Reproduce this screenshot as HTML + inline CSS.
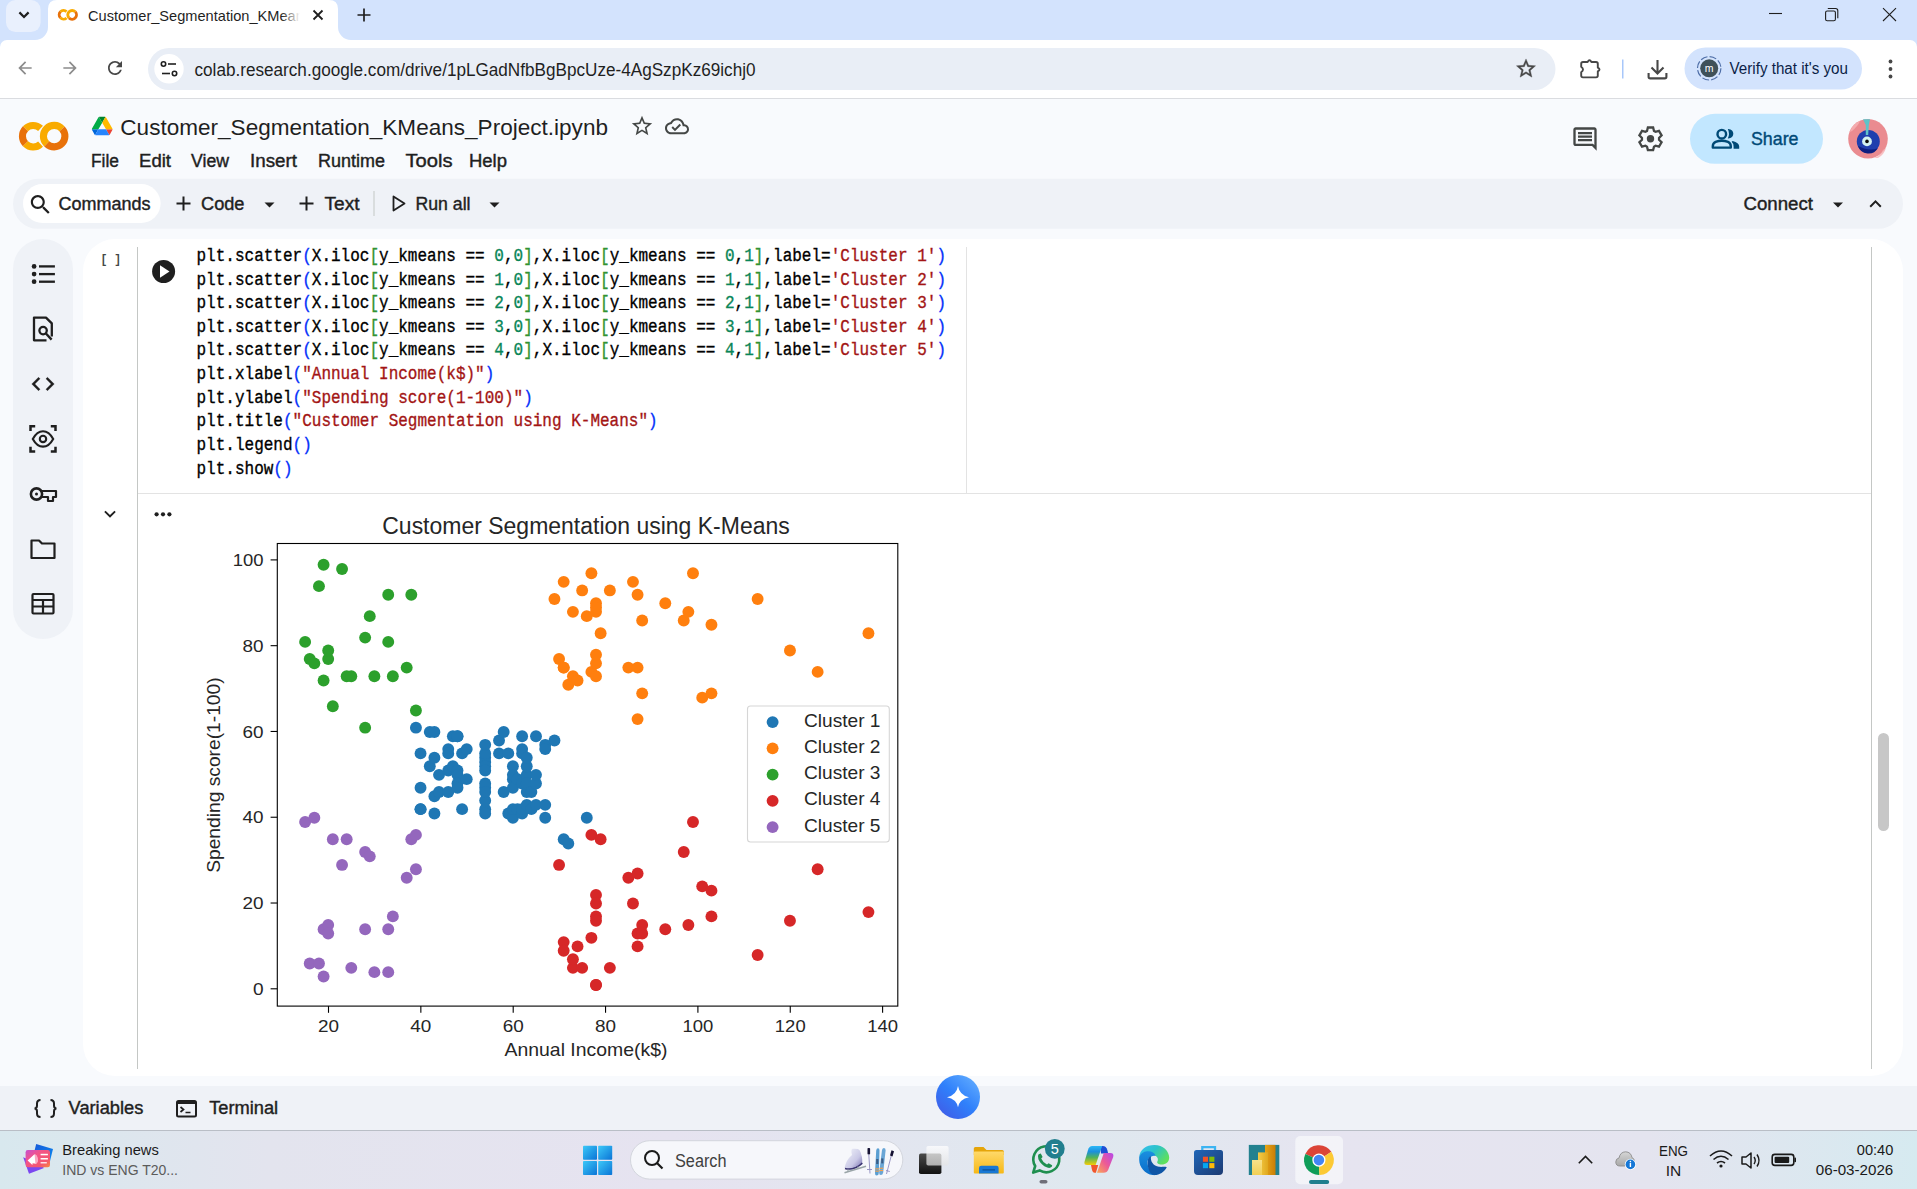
<!DOCTYPE html>
<html><head><meta charset="utf-8"><title>Customer_Segmentation_KMeans_Project.ipynb - Colab</title>
<style>html,body{margin:0;padding:0;background:#fff;overflow:hidden;}svg{display:block;}</style></head>
<body><svg width="1917" height="1189" viewBox="0 0 1917 1189">
<defs><linearGradient id="tabfade" x1="0" x2="1"><stop offset="0" stop-color="#fff" stop-opacity="0"/><stop offset="1" stop-color="#fff" stop-opacity="1"/></linearGradient></defs>
<rect x="0" y="0" width="1917" height="40" fill="#d3e3fd"/>
<rect x="6" y="0" width="34.6" height="32" rx="9.5" fill="#e9f0fd"/>
<path d="M19.4 12.4 L24 17 L28.6 12.4" fill="none" stroke="#1f1f1f" stroke-width="2.2"/>
<path d="M35 40 A13 13 0 0 0 48 27 L48 9 Q48 0 57 0 L329 0 Q338 0 338 9 L338 27 A13 13 0 0 0 351 40 Z" fill="#ffffff"/>
<path d="M66.52 11.62 A4.35 4.35 0 0 0 60.42 11.78" fill="none" stroke="#f9ab00" stroke-width="2.88"/>
<path d="M60.42 11.78 A4.35 4.35 0 0 0 60.42 17.82" fill="none" stroke="#e8710a" stroke-width="2.88"/>
<path d="M60.42 17.82 A4.35 4.35 0 0 0 66.52 17.98" fill="none" stroke="#f9ab00" stroke-width="2.88"/>
<path d="M75.24 11.83 A4.35 4.35 0 1 0 69.03 17.93" fill="none" stroke="#f9ab00" stroke-width="2.88"/>
<path d="M69.03 17.93 A4.35 4.35 0 0 0 75.24 11.83" fill="none" stroke="#e8710a" stroke-width="2.88"/>
<defs><clipPath id="tabclip"><rect x="80" y="0" width="220" height="40"/></clipPath></defs>
<g clip-path="url(#tabclip)">
<text x="88" y="21" font-size="14.6" fill="#1f1f1f" font-family="Liberation Sans" >Customer_Segmentation_KMeans_Project.ipynb</text>
</g>
<rect x="281" y="0" width="19" height="40" fill="url(#tabfade)"/>
<rect x="300" y="0" width="28" height="40" fill="#fff"/>
<path d="M313.5 10.5 L322.5 19.5 M322.5 10.5 L313.5 19.5" stroke="#1f1f1f" stroke-width="1.8"/>
<path d="M364 8.5 V21.5 M357.5 15 H370.5" stroke="#1f1f1f" stroke-width="1.7"/>
<path d="M1769 13.5 H1782" stroke="#1f1f1f" stroke-width="1.1"/>
<rect x="1825.6" y="11" width="9.8" height="9.8" rx="1.6" fill="none" stroke="#1f1f1f" stroke-width="1.1"/>
<path d="M1827.8 8.5 H1835.6 Q1837.8 8.5 1837.8 10.7 V18.2" fill="none" stroke="#1f1f1f" stroke-width="1.1"/>
<path d="M1883 8.2 L1896 21 M1896 8.2 L1883 21" stroke="#1f1f1f" stroke-width="1.1"/>
<rect x="0" y="40" width="1917" height="58" fill="#ffffff"/>
<path d="M0 40 H7 A7 7 0 0 0 0 47 Z" fill="#d3e3fd"/>
<path d="M1917 40 H1910 A7 7 0 0 1 1917 47 Z" fill="#d3e3fd"/>
<rect x="0" y="98" width="1917" height="1" fill="#dadce0"/>
<path transform="translate(15 58) scale(0.8333333333333334)" d="M20 11H7.83l5.59-5.59L12 4l-8 8 8 8 1.41-1.41L7.83 13H20v-2z" fill="#8c8c8c" />
<path transform="translate(60 58) scale(0.8333333333333334)" d="M12 4l-1.41 1.41L16.17 11H4v2h12.17l-5.58 5.59L12 20l8-8z" fill="#8c8c8c" />
<path transform="translate(104.5 57.5) scale(0.875)" d="M17.65 6.35C16.2 4.9 14.21 4 12 4c-4.42 0-7.99 3.58-7.99 8s3.57 8 7.99 8c3.73 0 6.84-2.55 7.73-6h-2.08c-.82 2.33-3.04 4-5.65 4-3.31 0-6-2.69-6-6s2.69-6 6-6c1.66 0 3.14.69 4.22 1.78L13 11h7V4l-2.35 2.35z" fill="#474747" />
<rect x="148" y="48" width="1407.5" height="42" rx="21" fill="#e9eef6"/>
<circle cx="169" cy="68.8" r="14.7" fill="#ffffff"/>
<circle cx="163.5" cy="64" r="2.2" fill="none" stroke="#1f1f1f" stroke-width="1.6"/>
<path d="M168 64 H176" stroke="#1f1f1f" stroke-width="1.6"/>
<circle cx="174.5" cy="73.5" r="2.2" fill="none" stroke="#1f1f1f" stroke-width="1.6"/>
<path d="M162 73.5 H170" stroke="#1f1f1f" stroke-width="1.6"/>
<text x="194.5" y="75.8" font-size="17.5" fill="#1f1f1f" font-family="Liberation Sans" textLength="561" lengthAdjust="spacingAndGlyphs" >colab.research.google.com/drive/1pLGadNfbBgBpcUze-4AgSzpKz69ichj0</text>
<path transform="translate(1514.5 57) scale(0.9583333333333334)" d="M22 9.24l-7.19-.62L12 2 9.19 8.63 2 9.24l5.46 4.73L5.82 21 12 17.27 18.18 21l-1.63-7.03L22 9.24zM12 15.4l-3.76 2.27 1-4.28-3.32-2.88 4.38-.38L12 6.1l1.71 4.04 4.38.38-3.32 2.88 1 4.28L12 15.4z" fill="#474747" stroke="#474747" stroke-width="0.35"/>
<path d="M1583 62 H1587.6 Q1589.5 58.6 1591.4 62 H1596 Q1597.8 62 1597.8 63.8 V67.6 Q1601.2 69.5 1597.8 71.4 V75.6 Q1597.8 77.4 1596 77.4 H1583 Q1581.2 77.4 1581.2 75.6 V72.2 Q1584.8 69.5 1581.2 66.8 V63.8 Q1581.2 62 1583 62 Z" fill="none" stroke="#474747" stroke-width="1.9" stroke-linejoin="round"/>
<rect x="1622" y="59.5" width="1.5" height="19" fill="#a8c7fa"/>
<path d="M1657.5 60 V73 M1651.5 67.5 L1657.5 73.5 L1663.5 67.5" fill="none" stroke="#474747" stroke-width="2.1"/>
<path d="M1648.6 73 V76.8 Q1648.6 78.4 1650.2 78.4 H1664.8 Q1666.4 78.4 1666.4 76.8 V73" fill="none" stroke="#474747" stroke-width="2.1"/>
<rect x="1684.5" y="47.5" width="177.5" height="42" rx="21" fill="#d3e3fd"/>
<circle cx="1709.2" cy="68.3" r="11.7" fill="none" stroke="#4f6fa8" stroke-width="1.2" stroke-dasharray="7 2.2"/>
<circle cx="1709.2" cy="68.3" r="9" fill="#3f5159"/>
<text x="1709.2" y="72" font-size="10.5" fill="#ffffff" font-family="Liberation Sans" text-anchor="middle" >m</text>
<text x="1729.5" y="74.4" font-size="16" fill="#0b1e47" font-family="Liberation Sans" textLength="118.5" lengthAdjust="spacingAndGlyphs" >Verify that it&#x27;s you</text>
<circle cx="1890.5" cy="61.5" r="1.9" fill="#474747"/>
<circle cx="1890.5" cy="69" r="1.9" fill="#474747"/>
<circle cx="1890.5" cy="76.5" r="1.9" fill="#474747"/>
<rect x="0" y="99" width="1917" height="987" fill="#f8fafd"/>
<path d="M40.53 128.34 A10.75 10.75 0 0 0 25.47 128.73" fill="none" stroke="#f9ab00" stroke-width="7.10"/>
<path d="M25.47 128.73 A10.75 10.75 0 0 0 25.47 143.67" fill="none" stroke="#e8710a" stroke-width="7.10"/>
<path d="M25.47 143.67 A10.75 10.75 0 0 0 40.53 144.06" fill="none" stroke="#f9ab00" stroke-width="7.10"/>
<path d="M62.06 128.87 A10.75 10.75 0 1 0 46.73 143.93" fill="none" stroke="#f9ab00" stroke-width="7.10"/>
<path d="M46.73 143.93 A10.75 10.75 0 0 0 62.06 128.87" fill="none" stroke="#e8710a" stroke-width="7.10"/>
<g transform="translate(91.9 116.8) scale(0.236)"><path d="m6.6 66.85 3.85 6.65c.8 1.4 1.95 2.5 3.3 3.3l13.75-23.8h-27.5c0 1.55.4 3.1 1.2 4.5z" fill="#0066da"/><path d="m43.65 25-13.75-23.8c-1.35.8-2.5 1.9-3.3 3.3l-25.4 44a9.06 9.06 0 0 0 -1.2 4.5h27.5z" fill="#00ac47"/><path d="m73.55 76.8c1.35-.8 2.5-1.9 3.3-3.3l1.6-2.75 7.65-13.25c.8-1.4 1.2-2.95 1.2-4.5h-27.502l5.852 11.5z" fill="#ea4335"/><path d="m43.65 25 13.75-23.8c-1.35-.8-2.9-1.2-4.5-1.2h-18.5c-1.6 0-3.15.45-4.5 1.2z" fill="#00832d"/><path d="m59.8 53h-32.3l-13.75 23.8c1.35.8 2.9 1.2 4.5 1.2h50.8c1.6 0 3.15-.45 4.5-1.2z" fill="#2684fc"/><path d="m73.4 26.5-12.7-22c-.8-1.4-1.95-2.5-3.3-3.3l-13.75 23.8 16.15 28h27.45c0-1.55-.4-3.1-1.2-4.5z" fill="#ffba00"/></g>
<text x="120.3" y="135" font-size="22.5" fill="#1f1f1f" font-family="Liberation Sans" textLength="487.7" lengthAdjust="spacingAndGlyphs" >Customer_Segmentation_KMeans_Project.ipynb</text>
<path transform="translate(629.8 113.8) scale(1.0166666666666666)" d="M22 9.24l-7.19-.62L12 2 9.19 8.63 2 9.24l5.46 4.73L5.82 21 12 17.27 18.18 21l-1.63-7.03L22 9.24zM12 15.4l-3.76 2.27 1-4.28-3.32-2.88 4.38-.38L12 6.1l1.71 4.04 4.38.38-3.32 2.88 1 4.28L12 15.4z" fill="#444746" />
<path transform="translate(665 114.2) scale(1.0)" d="M19.35 10.04C18.67 6.59 15.64 4 12 4 9.11 4 6.6 5.64 5.35 8.04 2.34 8.36 0 10.91 0 14c0 3.31 2.69 6 6 6h13c2.76 0 5-2.24 5-5 0-2.64-2.05-4.78-4.65-4.96zM19 18H6c-2.21 0-4-1.79-4-4 0-2.05 1.53-3.76 3.56-3.97l1.07-.11.5-.95C8.08 7.14 9.94 6 12 6c2.62 0 4.88 1.86 5.39 4.43l.3 1.5 1.53.11c1.56.1 2.78 1.41 2.78 2.96 0 1.65-1.35 3-3 3zm-9-3.82l-2.09-2.09L6.5 13.5 10 17l6.01-6.01-1.41-1.41z" fill="#444746" />
<text x="91" y="166.7" font-size="17.5" fill="#1f1f1f" font-family="Liberation Sans" textLength="28" lengthAdjust="spacingAndGlyphs" stroke="#1f1f1f" stroke-width="0.4">File</text>
<text x="139" y="166.7" font-size="17.5" fill="#1f1f1f" font-family="Liberation Sans" textLength="32" lengthAdjust="spacingAndGlyphs" stroke="#1f1f1f" stroke-width="0.4">Edit</text>
<text x="191" y="166.7" font-size="17.5" fill="#1f1f1f" font-family="Liberation Sans" textLength="38" lengthAdjust="spacingAndGlyphs" stroke="#1f1f1f" stroke-width="0.4">View</text>
<text x="250" y="166.7" font-size="17.5" fill="#1f1f1f" font-family="Liberation Sans" textLength="47" lengthAdjust="spacingAndGlyphs" stroke="#1f1f1f" stroke-width="0.4">Insert</text>
<text x="318" y="166.7" font-size="17.5" fill="#1f1f1f" font-family="Liberation Sans" textLength="67" lengthAdjust="spacingAndGlyphs" stroke="#1f1f1f" stroke-width="0.4">Runtime</text>
<text x="405.5" y="166.7" font-size="17.5" fill="#1f1f1f" font-family="Liberation Sans" textLength="47" lengthAdjust="spacingAndGlyphs" stroke="#1f1f1f" stroke-width="0.4">Tools</text>
<text x="469" y="166.7" font-size="17.5" fill="#1f1f1f" font-family="Liberation Sans" textLength="38" lengthAdjust="spacingAndGlyphs" stroke="#1f1f1f" stroke-width="0.4">Help</text>
<path transform="translate(1571 125) scale(1.1666666666666667)" d="M21.99 4c0-1.1-.89-2-1.99-2H4c-1.1 0-2 .9-2 2v12c0 1.1.9 2 2 2h14l4 4-.01-18zM20 4v13.17L18.83 16H4V4h16zM6 12h12v2H6zm0-3h12v2H6zm0-3h12v2H6z" fill="#444746" />
<path d="M1647.00 130.94 L1647.89 127.50 L1653.11 127.50 L1654.00 130.94 L1655.55 131.84 L1658.98 130.89 L1661.59 135.41 L1659.05 137.90 L1659.05 139.70 L1661.59 142.19 L1658.98 146.71 L1655.55 145.76 L1654.00 146.66 L1653.11 150.10 L1647.89 150.10 L1647.00 146.66 L1645.45 145.76 L1642.02 146.71 L1639.41 142.19 L1641.95 139.70 L1641.95 137.90 L1639.41 135.41 L1642.02 130.89 L1645.45 131.84 Z" fill="none" stroke="#444746" stroke-width="2.3" stroke-linejoin="miter"/>
<circle cx="1650.5" cy="138.8" r="3.7" fill="#444746"/>
<rect x="1690" y="113.8" width="133" height="50" rx="25" fill="#c2e7ff"/>
<circle cx="1721.8" cy="134.2" r="4.3" fill="none" stroke="#004a77" stroke-width="2.4"/>
<path d="M1712.8 147.6 V146.2 Q1712.8 143.2 1715.6 141.9 Q1718.6 140.7 1721.8 140.7 Q1725 140.7 1728 141.9 Q1730.8 143.2 1730.8 146.2 V147.6 Z" fill="none" stroke="#004a77" stroke-width="2.4" stroke-linejoin="round"/>
<path d="M1727.8 129 C1735.2 128.6 1735.2 138.9 1727.8 138.5 Q1730.2 133.75 1727.8 129 Z" fill="#004a77"/>
<path d="M1732.6 141.1 Q1739.2 142.6 1739.2 146.6 V148.8 H1733.6 V146.6 Q1733.6 143.4 1731.6 141.7 Z" fill="#004a77"/>
<text x="1751" y="145.4" font-size="18.5" fill="#004a77" font-family="Liberation Sans" textLength="47.5" lengthAdjust="spacingAndGlyphs" stroke="#004a77" stroke-width="0.4">Share</text>
<circle cx="1868" cy="138.8" r="19.8" fill="#ea8b90"/>
<path d="M1852 131 Q1858 126 1860 121 L1856 123 Q1851 127 1850 132 Z" fill="#f6b3b5" opacity="0.8"/>
<path d="M1883 150 Q1880 156 1874 158 L1878 158 Q1884 155 1886 148 Z" fill="#f6b3b5" opacity="0.8"/>
<circle cx="1868.3" cy="141.4" r="11.5" fill="#1f3fae"/>
<path d="M1858 146 A11 11 0 0 0 1878 148 Q1870 152 1858 146 Z" fill="#0d1f80"/>
<circle cx="1867" cy="141.4" r="4.9" fill="#d3f2f1"/>
<circle cx="1867" cy="141.4" r="1.8" fill="#0a0a0a"/>
<path d="M1863 119.2 H1870 L1868.8 125 L1868.2 135 H1865.8 L1865.8 125 Z" fill="#5ec4c9"/>
<rect x="13" y="178.8" width="1890" height="50" rx="25" fill="#eff2f7"/>
<rect x="23" y="184" width="137.6" height="39" rx="19.5" fill="#ffffff"/>
<path transform="translate(27.6 191.8) scale(1.075)" d="M15.5 14h-.79l-.28-.27C15.41 12.59 16 11.11 16 9.5 16 5.91 13.09 3 9.5 3S3 5.91 3 9.5 5.91 16 9.5 16c1.61 0 3.09-.59 4.23-1.57l.27.28v.79l5 4.99L20.49 19l-4.99-5zm-6 0C7.01 14 5 11.99 5 9.5S7.01 5 9.5 5 14 7.01 14 9.5 11.99 14 9.5 14z" fill="#1f1f1f" />
<text x="58.5" y="209.8" font-size="17.5" fill="#1f1f1f" font-family="Liberation Sans" textLength="92" lengthAdjust="spacingAndGlyphs" stroke="#1f1f1f" stroke-width="0.4">Commands</text>
<path transform="translate(171.5 191.5) scale(1.0)" d="M19 13h-6v6h-2v-6H5v-2h6V5h2v6h6v2z" fill="#1f1f1f" />
<text x="201" y="210.3" font-size="17.5" fill="#1f1f1f" font-family="Liberation Sans" textLength="43.5" lengthAdjust="spacingAndGlyphs" stroke="#1f1f1f" stroke-width="0.4">Code</text>
<path transform="translate(257.5 192.5) scale(1.0)" d="M7 10l5 5 5-5z" fill="#1f1f1f" />
<path transform="translate(294.5 191.5) scale(1.0)" d="M19 13h-6v6h-2v-6H5v-2h6V5h2v6h6v2z" fill="#1f1f1f" />
<text x="324.5" y="210.3" font-size="17.5" fill="#1f1f1f" font-family="Liberation Sans" textLength="35" lengthAdjust="spacingAndGlyphs" stroke="#1f1f1f" stroke-width="0.4">Text</text>
<rect x="373.5" y="191" width="1" height="25" fill="#c4c7c5"/>
<path d="M393.5 196.5 L404.5 203.5 L393.5 210.5 Z" fill="none" stroke="#1f1f1f" stroke-width="1.8" stroke-linejoin="round"/>
<text x="415.5" y="210.3" font-size="17.5" fill="#1f1f1f" font-family="Liberation Sans" textLength="55" lengthAdjust="spacingAndGlyphs" stroke="#1f1f1f" stroke-width="0.4">Run all</text>
<path transform="translate(482.5 192.5) scale(1.0)" d="M7 10l5 5 5-5z" fill="#1f1f1f" />
<text x="1743.5" y="210" font-size="17.5" fill="#1f1f1f" font-family="Liberation Sans" textLength="69.5" lengthAdjust="spacingAndGlyphs" stroke="#1f1f1f" stroke-width="0.4">Connect</text>
<path transform="translate(1826 192.5) scale(1.0)" d="M7 10l5 5 5-5z" fill="#1f1f1f" />
<path transform="translate(1863.5 192) scale(1.0)" d="M12 8l-6 6 1.41 1.41L12 10.83l4.59 4.58L18 14z" fill="#1f1f1f" />
<rect x="13" y="239" width="60" height="400" rx="30" fill="#eff2f7"/>
<circle cx="34.1" cy="266.4" r="2.35" fill="#1f1f1f"/>
<rect x="39" y="265.25" width="15.9" height="2.3" fill="#1f1f1f"/>
<circle cx="34.1" cy="274.1" r="2.35" fill="#1f1f1f"/>
<rect x="39" y="272.95" width="15.9" height="2.3" fill="#1f1f1f"/>
<circle cx="34.1" cy="281.7" r="2.35" fill="#1f1f1f"/>
<rect x="39" y="280.55" width="15.9" height="2.3" fill="#1f1f1f"/>
<path d="M46.5 340.3 H34 V317.6 H46 L51.8 323.4 V336.5" fill="none" stroke="#1f1f1f" stroke-width="2.3" stroke-linejoin="round"/>
<circle cx="43.1" cy="330.6" r="3.7" fill="none" stroke="#1f1f1f" stroke-width="2.3"/>
<path d="M45.7 333.3 L51.6 339.6" stroke="#1f1f1f" stroke-width="2.4"/>
<path transform="translate(29.5 370.5) scale(1.125)" d="M9.4 16.6L4.8 12l4.6-4.6L8 6l-6 6 6 6 1.4-1.4zm5.2 0l4.6-4.6-4.6-4.6L16 6l6 6-6 6-1.4-1.4z" fill="#1f1f1f" stroke="#1f1f1f" stroke-width="0.25"/>
<path d="M30.5 431 V426.3 H35.2 M50.8 426.3 H55.5 V431 M55.5 446.7 V451.4 H50.8 M35.2 451.4 H30.5 V446.7" fill="none" stroke="#1f1f1f" stroke-width="2.5"/>
<path d="M32.8 438.9 Q37 431.2 43 431.2 Q49 431.2 53.2 438.9 Q49 446.6 43 446.6 Q37 446.6 32.8 438.9 Z" fill="none" stroke="#1f1f1f" stroke-width="2.1"/>
<circle cx="43" cy="438.9" r="3.2" fill="none" stroke="#1f1f1f" stroke-width="2.1"/>
<circle cx="36.5" cy="494" r="5.6" fill="none" stroke="#1f1f1f" stroke-width="2.6"/>
<circle cx="36.5" cy="494" r="1.5" fill="#1f1f1f"/>
<path d="M42 491 H56 V497 H53 V501 H48 V497 H42" fill="none" stroke="#1f1f1f" stroke-width="2.2" stroke-linejoin="round"/>
<path d="M31.5 540.5 H39 L42 543.5 H54.5 V558 H31.5 Z" fill="none" stroke="#1f1f1f" stroke-width="2.2" stroke-linejoin="round"/>
<rect x="32.5" y="594" width="21" height="19.5" rx="1" fill="none" stroke="#1f1f1f" stroke-width="2.2"/>
<path d="M32.5 600 H53.5 M32.5 606.5 H53.5 M43 600 V613.5" stroke="#1f1f1f" stroke-width="2.2"/>
<rect x="83" y="239" width="1820" height="837" rx="32" fill="#ffffff"/>
<rect x="0" y="1086" width="1917" height="44" fill="#eff2f7"/>
<path d="M40.5 1100 Q37 1100 37 1103.5 V1105.5 Q37 1108.5 34.5 1108.5 Q37 1108.5 37 1111.5 V1113.5 Q37 1117 40.5 1117 M50.5 1100 Q54 1100 54 1103.5 V1105.5 Q54 1108.5 56.5 1108.5 Q54 1108.5 54 1111.5 V1113.5 Q54 1117 50.5 1117" fill="none" stroke="#1f1f1f" stroke-width="2"/>
<text x="68.6" y="1114" font-size="18" fill="#1f1f1f" font-family="Liberation Sans" textLength="74.7" lengthAdjust="spacingAndGlyphs" stroke="#1f1f1f" stroke-width="0.4">Variables</text>
<rect x="177" y="1101" width="19" height="15.5" rx="1.5" fill="none" stroke="#1f1f1f" stroke-width="2"/>
<rect x="177" y="1101" width="19" height="3" fill="#1f1f1f"/>
<path d="M180.5 1107 L183.5 1109.5 L180.5 1112 M185.5 1112.5 H190.5" fill="none" stroke="#1f1f1f" stroke-width="1.7"/>
<text x="209.2" y="1114" font-size="18" fill="#1f1f1f" font-family="Liberation Sans" textLength="69" lengthAdjust="spacingAndGlyphs" stroke="#1f1f1f" stroke-width="0.4">Terminal</text>
<defs><linearGradient id="gem" x1="0.85" y1="0.15" x2="0.2" y2="0.9"><stop offset="0" stop-color="#58a4fe"/><stop offset="0.5" stop-color="#2f80fb"/><stop offset="1" stop-color="#3d62ea"/></linearGradient></defs>
<circle cx="958" cy="1097" r="22" fill="url(#gem)"/>
<path d="M958 1086 Q959.6 1095.4 969 1097.2 Q959.6 1099 958 1107.2 Q956.4 1099 947 1097.2 Q956.4 1095.4 958 1086 Z" fill="#ffffff"/>
<rect x="137" y="247" width="1" height="822" fill="#c4c7c5"/>
<rect x="1871" y="247" width="1" height="822" fill="#c4c7c5"/>
<rect x="966" y="247" width="1" height="246" fill="#e3e3e3"/>
<rect x="138" y="493" width="1733" height="1" fill="#e3e3e3"/>
<text x="100.6" y="263.2" font-size="12.2" fill="#444746" font-family="Liberation Mono" textLength="20.6" lengthAdjust="spacingAndGlyphs" font-weight="bold" >[ ]</text>
<circle cx="163.6" cy="271.5" r="11.5" fill="#1f1f1f"/>
<path d="M160 265.3 L169.5 271.5 L160 277.7 Z" fill="#ffffff"/>
<path transform="translate(98.5 502.5) scale(0.9583333333333334)" d="M16.59 8.59L12 13.17 7.41 8.59 6 10l6 6 6-6z" fill="#1f1f1f" />
<circle cx="156.6" cy="514.3" r="2.1" fill="#1f1f1f"/>
<circle cx="163" cy="514.3" r="2.1" fill="#1f1f1f"/>
<circle cx="169.4" cy="514.3" r="2.1" fill="#1f1f1f"/>
<text x="196.5" y="260.90" font-family="Liberation Mono" font-size="16.02" xml:space="preserve" transform="translate(0 260.90) scale(1 1.1) translate(0 -260.90)"><tspan fill="#000000" stroke="#000000" stroke-width="0.3">plt.scatter</tspan><tspan fill="#0431fa" stroke="#0431fa" stroke-width="0.3">(</tspan><tspan fill="#000000" stroke="#000000" stroke-width="0.3">X.iloc</tspan><tspan fill="#319331" stroke="#319331" stroke-width="0.3">[</tspan><tspan fill="#000000" stroke="#000000" stroke-width="0.3">y_kmeans == </tspan><tspan fill="#098658" stroke="#098658" stroke-width="0.3">0</tspan><tspan fill="#000000" stroke="#000000" stroke-width="0.3">,</tspan><tspan fill="#098658" stroke="#098658" stroke-width="0.3">0</tspan><tspan fill="#319331" stroke="#319331" stroke-width="0.3">]</tspan><tspan fill="#000000" stroke="#000000" stroke-width="0.3">,X.iloc</tspan><tspan fill="#319331" stroke="#319331" stroke-width="0.3">[</tspan><tspan fill="#000000" stroke="#000000" stroke-width="0.3">y_kmeans == </tspan><tspan fill="#098658" stroke="#098658" stroke-width="0.3">0</tspan><tspan fill="#000000" stroke="#000000" stroke-width="0.3">,</tspan><tspan fill="#098658" stroke="#098658" stroke-width="0.3">1</tspan><tspan fill="#319331" stroke="#319331" stroke-width="0.3">]</tspan><tspan fill="#000000" stroke="#000000" stroke-width="0.3">,label=</tspan><tspan fill="#a31515" stroke="#a31515" stroke-width="0.3">&#x27;Cluster 1&#x27;</tspan><tspan fill="#0431fa" stroke="#0431fa" stroke-width="0.3">)</tspan></text>
<text x="196.5" y="284.54" font-family="Liberation Mono" font-size="16.02" xml:space="preserve" transform="translate(0 284.54) scale(1 1.1) translate(0 -284.54)"><tspan fill="#000000" stroke="#000000" stroke-width="0.3">plt.scatter</tspan><tspan fill="#0431fa" stroke="#0431fa" stroke-width="0.3">(</tspan><tspan fill="#000000" stroke="#000000" stroke-width="0.3">X.iloc</tspan><tspan fill="#319331" stroke="#319331" stroke-width="0.3">[</tspan><tspan fill="#000000" stroke="#000000" stroke-width="0.3">y_kmeans == </tspan><tspan fill="#098658" stroke="#098658" stroke-width="0.3">1</tspan><tspan fill="#000000" stroke="#000000" stroke-width="0.3">,</tspan><tspan fill="#098658" stroke="#098658" stroke-width="0.3">0</tspan><tspan fill="#319331" stroke="#319331" stroke-width="0.3">]</tspan><tspan fill="#000000" stroke="#000000" stroke-width="0.3">,X.iloc</tspan><tspan fill="#319331" stroke="#319331" stroke-width="0.3">[</tspan><tspan fill="#000000" stroke="#000000" stroke-width="0.3">y_kmeans == </tspan><tspan fill="#098658" stroke="#098658" stroke-width="0.3">1</tspan><tspan fill="#000000" stroke="#000000" stroke-width="0.3">,</tspan><tspan fill="#098658" stroke="#098658" stroke-width="0.3">1</tspan><tspan fill="#319331" stroke="#319331" stroke-width="0.3">]</tspan><tspan fill="#000000" stroke="#000000" stroke-width="0.3">,label=</tspan><tspan fill="#a31515" stroke="#a31515" stroke-width="0.3">&#x27;Cluster 2&#x27;</tspan><tspan fill="#0431fa" stroke="#0431fa" stroke-width="0.3">)</tspan></text>
<text x="196.5" y="308.18" font-family="Liberation Mono" font-size="16.02" xml:space="preserve" transform="translate(0 308.18) scale(1 1.1) translate(0 -308.18)"><tspan fill="#000000" stroke="#000000" stroke-width="0.3">plt.scatter</tspan><tspan fill="#0431fa" stroke="#0431fa" stroke-width="0.3">(</tspan><tspan fill="#000000" stroke="#000000" stroke-width="0.3">X.iloc</tspan><tspan fill="#319331" stroke="#319331" stroke-width="0.3">[</tspan><tspan fill="#000000" stroke="#000000" stroke-width="0.3">y_kmeans == </tspan><tspan fill="#098658" stroke="#098658" stroke-width="0.3">2</tspan><tspan fill="#000000" stroke="#000000" stroke-width="0.3">,</tspan><tspan fill="#098658" stroke="#098658" stroke-width="0.3">0</tspan><tspan fill="#319331" stroke="#319331" stroke-width="0.3">]</tspan><tspan fill="#000000" stroke="#000000" stroke-width="0.3">,X.iloc</tspan><tspan fill="#319331" stroke="#319331" stroke-width="0.3">[</tspan><tspan fill="#000000" stroke="#000000" stroke-width="0.3">y_kmeans == </tspan><tspan fill="#098658" stroke="#098658" stroke-width="0.3">2</tspan><tspan fill="#000000" stroke="#000000" stroke-width="0.3">,</tspan><tspan fill="#098658" stroke="#098658" stroke-width="0.3">1</tspan><tspan fill="#319331" stroke="#319331" stroke-width="0.3">]</tspan><tspan fill="#000000" stroke="#000000" stroke-width="0.3">,label=</tspan><tspan fill="#a31515" stroke="#a31515" stroke-width="0.3">&#x27;Cluster 3&#x27;</tspan><tspan fill="#0431fa" stroke="#0431fa" stroke-width="0.3">)</tspan></text>
<text x="196.5" y="331.82" font-family="Liberation Mono" font-size="16.02" xml:space="preserve" transform="translate(0 331.82) scale(1 1.1) translate(0 -331.82)"><tspan fill="#000000" stroke="#000000" stroke-width="0.3">plt.scatter</tspan><tspan fill="#0431fa" stroke="#0431fa" stroke-width="0.3">(</tspan><tspan fill="#000000" stroke="#000000" stroke-width="0.3">X.iloc</tspan><tspan fill="#319331" stroke="#319331" stroke-width="0.3">[</tspan><tspan fill="#000000" stroke="#000000" stroke-width="0.3">y_kmeans == </tspan><tspan fill="#098658" stroke="#098658" stroke-width="0.3">3</tspan><tspan fill="#000000" stroke="#000000" stroke-width="0.3">,</tspan><tspan fill="#098658" stroke="#098658" stroke-width="0.3">0</tspan><tspan fill="#319331" stroke="#319331" stroke-width="0.3">]</tspan><tspan fill="#000000" stroke="#000000" stroke-width="0.3">,X.iloc</tspan><tspan fill="#319331" stroke="#319331" stroke-width="0.3">[</tspan><tspan fill="#000000" stroke="#000000" stroke-width="0.3">y_kmeans == </tspan><tspan fill="#098658" stroke="#098658" stroke-width="0.3">3</tspan><tspan fill="#000000" stroke="#000000" stroke-width="0.3">,</tspan><tspan fill="#098658" stroke="#098658" stroke-width="0.3">1</tspan><tspan fill="#319331" stroke="#319331" stroke-width="0.3">]</tspan><tspan fill="#000000" stroke="#000000" stroke-width="0.3">,label=</tspan><tspan fill="#a31515" stroke="#a31515" stroke-width="0.3">&#x27;Cluster 4&#x27;</tspan><tspan fill="#0431fa" stroke="#0431fa" stroke-width="0.3">)</tspan></text>
<text x="196.5" y="355.46" font-family="Liberation Mono" font-size="16.02" xml:space="preserve" transform="translate(0 355.46) scale(1 1.1) translate(0 -355.46)"><tspan fill="#000000" stroke="#000000" stroke-width="0.3">plt.scatter</tspan><tspan fill="#0431fa" stroke="#0431fa" stroke-width="0.3">(</tspan><tspan fill="#000000" stroke="#000000" stroke-width="0.3">X.iloc</tspan><tspan fill="#319331" stroke="#319331" stroke-width="0.3">[</tspan><tspan fill="#000000" stroke="#000000" stroke-width="0.3">y_kmeans == </tspan><tspan fill="#098658" stroke="#098658" stroke-width="0.3">4</tspan><tspan fill="#000000" stroke="#000000" stroke-width="0.3">,</tspan><tspan fill="#098658" stroke="#098658" stroke-width="0.3">0</tspan><tspan fill="#319331" stroke="#319331" stroke-width="0.3">]</tspan><tspan fill="#000000" stroke="#000000" stroke-width="0.3">,X.iloc</tspan><tspan fill="#319331" stroke="#319331" stroke-width="0.3">[</tspan><tspan fill="#000000" stroke="#000000" stroke-width="0.3">y_kmeans == </tspan><tspan fill="#098658" stroke="#098658" stroke-width="0.3">4</tspan><tspan fill="#000000" stroke="#000000" stroke-width="0.3">,</tspan><tspan fill="#098658" stroke="#098658" stroke-width="0.3">1</tspan><tspan fill="#319331" stroke="#319331" stroke-width="0.3">]</tspan><tspan fill="#000000" stroke="#000000" stroke-width="0.3">,label=</tspan><tspan fill="#a31515" stroke="#a31515" stroke-width="0.3">&#x27;Cluster 5&#x27;</tspan><tspan fill="#0431fa" stroke="#0431fa" stroke-width="0.3">)</tspan></text>
<text x="196.5" y="379.10" font-family="Liberation Mono" font-size="16.02" xml:space="preserve" transform="translate(0 379.10) scale(1 1.1) translate(0 -379.10)"><tspan fill="#000000" stroke="#000000" stroke-width="0.3">plt.xlabel</tspan><tspan fill="#0431fa" stroke="#0431fa" stroke-width="0.3">(</tspan><tspan fill="#a31515" stroke="#a31515" stroke-width="0.3">&quot;Annual Income(k$)&quot;</tspan><tspan fill="#0431fa" stroke="#0431fa" stroke-width="0.3">)</tspan></text>
<text x="196.5" y="402.74" font-family="Liberation Mono" font-size="16.02" xml:space="preserve" transform="translate(0 402.74) scale(1 1.1) translate(0 -402.74)"><tspan fill="#000000" stroke="#000000" stroke-width="0.3">plt.ylabel</tspan><tspan fill="#0431fa" stroke="#0431fa" stroke-width="0.3">(</tspan><tspan fill="#a31515" stroke="#a31515" stroke-width="0.3">&quot;Spending score(1-100)&quot;</tspan><tspan fill="#0431fa" stroke="#0431fa" stroke-width="0.3">)</tspan></text>
<text x="196.5" y="426.38" font-family="Liberation Mono" font-size="16.02" xml:space="preserve" transform="translate(0 426.38) scale(1 1.1) translate(0 -426.38)"><tspan fill="#000000" stroke="#000000" stroke-width="0.3">plt.title</tspan><tspan fill="#0431fa" stroke="#0431fa" stroke-width="0.3">(</tspan><tspan fill="#a31515" stroke="#a31515" stroke-width="0.3">&quot;Customer Segmentation using K-Means&quot;</tspan><tspan fill="#0431fa" stroke="#0431fa" stroke-width="0.3">)</tspan></text>
<text x="196.5" y="450.02" font-family="Liberation Mono" font-size="16.02" xml:space="preserve" transform="translate(0 450.02) scale(1 1.1) translate(0 -450.02)"><tspan fill="#000000" stroke="#000000" stroke-width="0.3">plt.legend</tspan><tspan fill="#0431fa" stroke="#0431fa" stroke-width="0.3">()</tspan></text>
<text x="196.5" y="473.66" font-family="Liberation Mono" font-size="16.02" xml:space="preserve" transform="translate(0 473.66) scale(1 1.1) translate(0 -473.66)"><tspan fill="#000000" stroke="#000000" stroke-width="0.3">plt.show</tspan><tspan fill="#0431fa" stroke="#0431fa" stroke-width="0.3">()</tspan></text>
<rect x="1878" y="733" width="11" height="98" rx="5.5" fill="#c7c7c7"/>
<circle cx="415.93" cy="727.67" r="5.95" fill="#1f77b4"/>
<circle cx="420.55" cy="753.40" r="5.95" fill="#1f77b4"/>
<circle cx="420.55" cy="787.72" r="5.95" fill="#1f77b4"/>
<circle cx="420.55" cy="809.16" r="5.95" fill="#1f77b4"/>
<circle cx="420.55" cy="809.16" r="5.95" fill="#1f77b4"/>
<circle cx="429.79" cy="766.27" r="5.95" fill="#1f77b4"/>
<circle cx="429.79" cy="731.96" r="5.95" fill="#1f77b4"/>
<circle cx="434.40" cy="757.69" r="5.95" fill="#1f77b4"/>
<circle cx="434.40" cy="731.96" r="5.95" fill="#1f77b4"/>
<circle cx="434.40" cy="796.29" r="5.95" fill="#1f77b4"/>
<circle cx="434.40" cy="813.45" r="5.95" fill="#1f77b4"/>
<circle cx="439.02" cy="774.85" r="5.95" fill="#1f77b4"/>
<circle cx="439.02" cy="792.01" r="5.95" fill="#1f77b4"/>
<circle cx="448.25" cy="770.56" r="5.95" fill="#1f77b4"/>
<circle cx="448.25" cy="792.01" r="5.95" fill="#1f77b4"/>
<circle cx="448.25" cy="749.12" r="5.95" fill="#1f77b4"/>
<circle cx="448.25" cy="753.40" r="5.95" fill="#1f77b4"/>
<circle cx="452.87" cy="766.27" r="5.95" fill="#1f77b4"/>
<circle cx="452.87" cy="736.25" r="5.95" fill="#1f77b4"/>
<circle cx="457.49" cy="770.56" r="5.95" fill="#1f77b4"/>
<circle cx="457.49" cy="736.25" r="5.95" fill="#1f77b4"/>
<circle cx="457.49" cy="774.85" r="5.95" fill="#1f77b4"/>
<circle cx="457.49" cy="783.43" r="5.95" fill="#1f77b4"/>
<circle cx="457.49" cy="736.25" r="5.95" fill="#1f77b4"/>
<circle cx="457.49" cy="787.72" r="5.95" fill="#1f77b4"/>
<circle cx="462.11" cy="753.40" r="5.95" fill="#1f77b4"/>
<circle cx="462.11" cy="809.16" r="5.95" fill="#1f77b4"/>
<circle cx="466.72" cy="779.14" r="5.95" fill="#1f77b4"/>
<circle cx="466.72" cy="749.12" r="5.95" fill="#1f77b4"/>
<circle cx="485.19" cy="787.72" r="5.95" fill="#1f77b4"/>
<circle cx="485.19" cy="757.69" r="5.95" fill="#1f77b4"/>
<circle cx="485.19" cy="761.98" r="5.95" fill="#1f77b4"/>
<circle cx="485.19" cy="783.43" r="5.95" fill="#1f77b4"/>
<circle cx="485.19" cy="766.27" r="5.95" fill="#1f77b4"/>
<circle cx="485.19" cy="809.16" r="5.95" fill="#1f77b4"/>
<circle cx="485.19" cy="770.56" r="5.95" fill="#1f77b4"/>
<circle cx="485.19" cy="753.40" r="5.95" fill="#1f77b4"/>
<circle cx="485.19" cy="813.45" r="5.95" fill="#1f77b4"/>
<circle cx="485.19" cy="800.58" r="5.95" fill="#1f77b4"/>
<circle cx="485.19" cy="744.83" r="5.95" fill="#1f77b4"/>
<circle cx="485.19" cy="792.01" r="5.95" fill="#1f77b4"/>
<circle cx="499.05" cy="740.54" r="5.95" fill="#1f77b4"/>
<circle cx="499.05" cy="753.40" r="5.95" fill="#1f77b4"/>
<circle cx="503.67" cy="731.96" r="5.95" fill="#1f77b4"/>
<circle cx="503.67" cy="792.01" r="5.95" fill="#1f77b4"/>
<circle cx="508.28" cy="753.40" r="5.95" fill="#1f77b4"/>
<circle cx="508.28" cy="813.45" r="5.95" fill="#1f77b4"/>
<circle cx="512.90" cy="779.14" r="5.95" fill="#1f77b4"/>
<circle cx="512.90" cy="817.74" r="5.95" fill="#1f77b4"/>
<circle cx="512.90" cy="809.16" r="5.95" fill="#1f77b4"/>
<circle cx="512.90" cy="766.27" r="5.95" fill="#1f77b4"/>
<circle cx="512.90" cy="787.72" r="5.95" fill="#1f77b4"/>
<circle cx="512.90" cy="774.85" r="5.95" fill="#1f77b4"/>
<circle cx="517.52" cy="809.16" r="5.95" fill="#1f77b4"/>
<circle cx="517.52" cy="779.14" r="5.95" fill="#1f77b4"/>
<circle cx="522.13" cy="813.45" r="5.95" fill="#1f77b4"/>
<circle cx="522.13" cy="783.43" r="5.95" fill="#1f77b4"/>
<circle cx="522.13" cy="736.25" r="5.95" fill="#1f77b4"/>
<circle cx="522.13" cy="753.40" r="5.95" fill="#1f77b4"/>
<circle cx="522.13" cy="749.12" r="5.95" fill="#1f77b4"/>
<circle cx="522.13" cy="809.16" r="5.95" fill="#1f77b4"/>
<circle cx="526.75" cy="774.85" r="5.95" fill="#1f77b4"/>
<circle cx="526.75" cy="792.01" r="5.95" fill="#1f77b4"/>
<circle cx="526.75" cy="804.87" r="5.95" fill="#1f77b4"/>
<circle cx="526.75" cy="783.43" r="5.95" fill="#1f77b4"/>
<circle cx="526.75" cy="766.27" r="5.95" fill="#1f77b4"/>
<circle cx="526.75" cy="757.69" r="5.95" fill="#1f77b4"/>
<circle cx="531.37" cy="809.16" r="5.95" fill="#1f77b4"/>
<circle cx="531.37" cy="792.01" r="5.95" fill="#1f77b4"/>
<circle cx="535.99" cy="783.43" r="5.95" fill="#1f77b4"/>
<circle cx="535.99" cy="774.85" r="5.95" fill="#1f77b4"/>
<circle cx="535.99" cy="804.87" r="5.95" fill="#1f77b4"/>
<circle cx="535.99" cy="736.25" r="5.95" fill="#1f77b4"/>
<circle cx="545.22" cy="804.87" r="5.95" fill="#1f77b4"/>
<circle cx="545.22" cy="744.83" r="5.95" fill="#1f77b4"/>
<circle cx="545.22" cy="749.12" r="5.95" fill="#1f77b4"/>
<circle cx="545.22" cy="817.74" r="5.95" fill="#1f77b4"/>
<circle cx="554.46" cy="740.54" r="5.95" fill="#1f77b4"/>
<circle cx="563.69" cy="839.18" r="5.95" fill="#1f77b4"/>
<circle cx="568.31" cy="843.47" r="5.95" fill="#1f77b4"/>
<circle cx="586.78" cy="817.74" r="5.95" fill="#1f77b4"/>
<circle cx="554.46" cy="599.00" r="5.95" fill="#ff7f0e"/>
<circle cx="559.08" cy="659.05" r="5.95" fill="#ff7f0e"/>
<circle cx="563.69" cy="581.85" r="5.95" fill="#ff7f0e"/>
<circle cx="563.69" cy="667.62" r="5.95" fill="#ff7f0e"/>
<circle cx="563.69" cy="667.62" r="5.95" fill="#ff7f0e"/>
<circle cx="568.31" cy="684.78" r="5.95" fill="#ff7f0e"/>
<circle cx="572.93" cy="611.87" r="5.95" fill="#ff7f0e"/>
<circle cx="572.93" cy="676.20" r="5.95" fill="#ff7f0e"/>
<circle cx="577.55" cy="680.49" r="5.95" fill="#ff7f0e"/>
<circle cx="582.16" cy="590.42" r="5.95" fill="#ff7f0e"/>
<circle cx="586.78" cy="616.16" r="5.95" fill="#ff7f0e"/>
<circle cx="591.40" cy="573.27" r="5.95" fill="#ff7f0e"/>
<circle cx="591.40" cy="671.91" r="5.95" fill="#ff7f0e"/>
<circle cx="596.01" cy="603.29" r="5.95" fill="#ff7f0e"/>
<circle cx="596.01" cy="611.87" r="5.95" fill="#ff7f0e"/>
<circle cx="596.01" cy="663.34" r="5.95" fill="#ff7f0e"/>
<circle cx="596.01" cy="607.58" r="5.95" fill="#ff7f0e"/>
<circle cx="596.01" cy="654.76" r="5.95" fill="#ff7f0e"/>
<circle cx="596.01" cy="676.20" r="5.95" fill="#ff7f0e"/>
<circle cx="600.63" cy="633.31" r="5.95" fill="#ff7f0e"/>
<circle cx="609.87" cy="590.42" r="5.95" fill="#ff7f0e"/>
<circle cx="628.34" cy="667.62" r="5.95" fill="#ff7f0e"/>
<circle cx="632.96" cy="581.85" r="5.95" fill="#ff7f0e"/>
<circle cx="637.57" cy="719.09" r="5.95" fill="#ff7f0e"/>
<circle cx="637.57" cy="667.62" r="5.95" fill="#ff7f0e"/>
<circle cx="637.57" cy="594.71" r="5.95" fill="#ff7f0e"/>
<circle cx="642.19" cy="620.45" r="5.95" fill="#ff7f0e"/>
<circle cx="642.19" cy="693.36" r="5.95" fill="#ff7f0e"/>
<circle cx="665.28" cy="603.29" r="5.95" fill="#ff7f0e"/>
<circle cx="683.75" cy="620.45" r="5.95" fill="#ff7f0e"/>
<circle cx="688.37" cy="611.87" r="5.95" fill="#ff7f0e"/>
<circle cx="692.98" cy="573.27" r="5.95" fill="#ff7f0e"/>
<circle cx="702.22" cy="697.65" r="5.95" fill="#ff7f0e"/>
<circle cx="711.45" cy="624.73" r="5.95" fill="#ff7f0e"/>
<circle cx="711.45" cy="693.36" r="5.95" fill="#ff7f0e"/>
<circle cx="757.63" cy="599.00" r="5.95" fill="#ff7f0e"/>
<circle cx="789.95" cy="650.47" r="5.95" fill="#ff7f0e"/>
<circle cx="817.65" cy="671.91" r="5.95" fill="#ff7f0e"/>
<circle cx="868.45" cy="633.31" r="5.95" fill="#ff7f0e"/>
<circle cx="305.11" cy="641.89" r="5.95" fill="#2ca02c"/>
<circle cx="309.73" cy="659.05" r="5.95" fill="#2ca02c"/>
<circle cx="314.35" cy="663.34" r="5.95" fill="#2ca02c"/>
<circle cx="318.96" cy="586.13" r="5.95" fill="#2ca02c"/>
<circle cx="323.58" cy="680.49" r="5.95" fill="#2ca02c"/>
<circle cx="323.58" cy="564.69" r="5.95" fill="#2ca02c"/>
<circle cx="328.20" cy="659.05" r="5.95" fill="#2ca02c"/>
<circle cx="328.20" cy="650.47" r="5.95" fill="#2ca02c"/>
<circle cx="332.82" cy="706.23" r="5.95" fill="#2ca02c"/>
<circle cx="342.05" cy="568.98" r="5.95" fill="#2ca02c"/>
<circle cx="346.67" cy="676.20" r="5.95" fill="#2ca02c"/>
<circle cx="351.29" cy="676.20" r="5.95" fill="#2ca02c"/>
<circle cx="365.14" cy="637.60" r="5.95" fill="#2ca02c"/>
<circle cx="365.14" cy="727.67" r="5.95" fill="#2ca02c"/>
<circle cx="369.76" cy="616.16" r="5.95" fill="#2ca02c"/>
<circle cx="374.37" cy="676.20" r="5.95" fill="#2ca02c"/>
<circle cx="388.23" cy="594.71" r="5.95" fill="#2ca02c"/>
<circle cx="388.23" cy="641.89" r="5.95" fill="#2ca02c"/>
<circle cx="392.84" cy="676.20" r="5.95" fill="#2ca02c"/>
<circle cx="406.70" cy="667.62" r="5.95" fill="#2ca02c"/>
<circle cx="411.31" cy="594.71" r="5.95" fill="#2ca02c"/>
<circle cx="415.93" cy="710.51" r="5.95" fill="#2ca02c"/>
<circle cx="559.08" cy="864.92" r="5.95" fill="#d62728"/>
<circle cx="563.69" cy="942.12" r="5.95" fill="#d62728"/>
<circle cx="563.69" cy="950.70" r="5.95" fill="#d62728"/>
<circle cx="572.93" cy="967.85" r="5.95" fill="#d62728"/>
<circle cx="572.93" cy="959.28" r="5.95" fill="#d62728"/>
<circle cx="577.55" cy="946.41" r="5.95" fill="#d62728"/>
<circle cx="582.16" cy="967.85" r="5.95" fill="#d62728"/>
<circle cx="591.40" cy="937.83" r="5.95" fill="#d62728"/>
<circle cx="591.40" cy="834.90" r="5.95" fill="#d62728"/>
<circle cx="596.01" cy="894.94" r="5.95" fill="#d62728"/>
<circle cx="596.01" cy="916.39" r="5.95" fill="#d62728"/>
<circle cx="596.01" cy="903.52" r="5.95" fill="#d62728"/>
<circle cx="596.01" cy="920.68" r="5.95" fill="#d62728"/>
<circle cx="596.01" cy="985.01" r="5.95" fill="#d62728"/>
<circle cx="596.01" cy="985.01" r="5.95" fill="#d62728"/>
<circle cx="600.63" cy="839.18" r="5.95" fill="#d62728"/>
<circle cx="609.87" cy="967.85" r="5.95" fill="#d62728"/>
<circle cx="628.34" cy="877.79" r="5.95" fill="#d62728"/>
<circle cx="632.96" cy="903.52" r="5.95" fill="#d62728"/>
<circle cx="637.57" cy="873.50" r="5.95" fill="#d62728"/>
<circle cx="637.57" cy="933.54" r="5.95" fill="#d62728"/>
<circle cx="637.57" cy="946.41" r="5.95" fill="#d62728"/>
<circle cx="642.19" cy="933.54" r="5.95" fill="#d62728"/>
<circle cx="642.19" cy="924.96" r="5.95" fill="#d62728"/>
<circle cx="665.28" cy="929.25" r="5.95" fill="#d62728"/>
<circle cx="683.75" cy="852.05" r="5.95" fill="#d62728"/>
<circle cx="688.37" cy="924.96" r="5.95" fill="#d62728"/>
<circle cx="692.98" cy="822.03" r="5.95" fill="#d62728"/>
<circle cx="702.22" cy="886.36" r="5.95" fill="#d62728"/>
<circle cx="711.45" cy="916.39" r="5.95" fill="#d62728"/>
<circle cx="711.45" cy="890.65" r="5.95" fill="#d62728"/>
<circle cx="757.63" cy="954.99" r="5.95" fill="#d62728"/>
<circle cx="789.95" cy="920.68" r="5.95" fill="#d62728"/>
<circle cx="817.65" cy="869.21" r="5.95" fill="#d62728"/>
<circle cx="868.45" cy="912.10" r="5.95" fill="#d62728"/>
<circle cx="305.11" cy="822.03" r="5.95" fill="#9467bd"/>
<circle cx="309.73" cy="963.57" r="5.95" fill="#9467bd"/>
<circle cx="314.35" cy="817.74" r="5.95" fill="#9467bd"/>
<circle cx="318.96" cy="963.57" r="5.95" fill="#9467bd"/>
<circle cx="323.58" cy="976.43" r="5.95" fill="#9467bd"/>
<circle cx="323.58" cy="929.25" r="5.95" fill="#9467bd"/>
<circle cx="328.20" cy="924.96" r="5.95" fill="#9467bd"/>
<circle cx="328.20" cy="933.54" r="5.95" fill="#9467bd"/>
<circle cx="332.82" cy="839.18" r="5.95" fill="#9467bd"/>
<circle cx="342.05" cy="864.92" r="5.95" fill="#9467bd"/>
<circle cx="346.67" cy="839.18" r="5.95" fill="#9467bd"/>
<circle cx="351.29" cy="967.85" r="5.95" fill="#9467bd"/>
<circle cx="365.14" cy="929.25" r="5.95" fill="#9467bd"/>
<circle cx="365.14" cy="852.05" r="5.95" fill="#9467bd"/>
<circle cx="369.76" cy="856.34" r="5.95" fill="#9467bd"/>
<circle cx="374.37" cy="972.14" r="5.95" fill="#9467bd"/>
<circle cx="388.23" cy="972.14" r="5.95" fill="#9467bd"/>
<circle cx="388.23" cy="929.25" r="5.95" fill="#9467bd"/>
<circle cx="392.84" cy="916.39" r="5.95" fill="#9467bd"/>
<circle cx="406.70" cy="877.79" r="5.95" fill="#9467bd"/>
<circle cx="411.31" cy="839.18" r="5.95" fill="#9467bd"/>
<circle cx="415.93" cy="834.90" r="5.95" fill="#9467bd"/>
<circle cx="415.93" cy="869.21" r="5.95" fill="#9467bd"/>
<rect x="277.3" y="543.5" width="620.5" height="462.6" fill="none" stroke="#000" stroke-width="1.1"/>
<path d="M328.50 1006.1 V1012.8" stroke="#000" stroke-width="1.1"/>
<text x="328.5" y="1031.9" font-size="17.4" fill="#262626" font-family="Liberation Sans" textLength="21.0" lengthAdjust="spacingAndGlyphs" text-anchor="middle" >20</text>
<path d="M420.85 1006.1 V1012.8" stroke="#000" stroke-width="1.1"/>
<text x="420.85" y="1031.9" font-size="17.4" fill="#262626" font-family="Liberation Sans" textLength="21.0" lengthAdjust="spacingAndGlyphs" text-anchor="middle" >40</text>
<path d="M513.20 1006.1 V1012.8" stroke="#000" stroke-width="1.1"/>
<text x="513.2" y="1031.9" font-size="17.4" fill="#262626" font-family="Liberation Sans" textLength="21.0" lengthAdjust="spacingAndGlyphs" text-anchor="middle" >60</text>
<path d="M605.55 1006.1 V1012.8" stroke="#000" stroke-width="1.1"/>
<text x="605.55" y="1031.9" font-size="17.4" fill="#262626" font-family="Liberation Sans" textLength="21.0" lengthAdjust="spacingAndGlyphs" text-anchor="middle" >80</text>
<path d="M697.90 1006.1 V1012.8" stroke="#000" stroke-width="1.1"/>
<text x="697.9" y="1031.9" font-size="17.4" fill="#262626" font-family="Liberation Sans" textLength="30.8" lengthAdjust="spacingAndGlyphs" text-anchor="middle" >100</text>
<path d="M790.25 1006.1 V1012.8" stroke="#000" stroke-width="1.1"/>
<text x="790.25" y="1031.9" font-size="17.4" fill="#262626" font-family="Liberation Sans" textLength="30.8" lengthAdjust="spacingAndGlyphs" text-anchor="middle" >120</text>
<path d="M882.60 1006.1 V1012.8" stroke="#000" stroke-width="1.1"/>
<text x="882.6" y="1031.9" font-size="17.4" fill="#262626" font-family="Liberation Sans" textLength="30.8" lengthAdjust="spacingAndGlyphs" text-anchor="middle" >140</text>
<path d="M277.3 988.80 H270.6" stroke="#000" stroke-width="1.1"/>
<text x="263.6" y="995.0" font-size="17.4" fill="#262626" font-family="Liberation Sans" textLength="10.6" lengthAdjust="spacingAndGlyphs" text-anchor="end" >0</text>
<path d="M277.3 903.02 H270.6" stroke="#000" stroke-width="1.1"/>
<text x="263.6" y="909.22" font-size="17.4" fill="#262626" font-family="Liberation Sans" textLength="21.0" lengthAdjust="spacingAndGlyphs" text-anchor="end" >20</text>
<path d="M277.3 817.24 H270.6" stroke="#000" stroke-width="1.1"/>
<text x="263.6" y="823.44" font-size="17.4" fill="#262626" font-family="Liberation Sans" textLength="21.0" lengthAdjust="spacingAndGlyphs" text-anchor="end" >40</text>
<path d="M277.3 731.46 H270.6" stroke="#000" stroke-width="1.1"/>
<text x="263.6" y="737.66" font-size="17.4" fill="#262626" font-family="Liberation Sans" textLength="21.0" lengthAdjust="spacingAndGlyphs" text-anchor="end" >60</text>
<path d="M277.3 645.68 H270.6" stroke="#000" stroke-width="1.1"/>
<text x="263.6" y="651.88" font-size="17.4" fill="#262626" font-family="Liberation Sans" textLength="21.0" lengthAdjust="spacingAndGlyphs" text-anchor="end" >80</text>
<path d="M277.3 559.90 H270.6" stroke="#000" stroke-width="1.1"/>
<text x="263.6" y="566.1" font-size="17.4" fill="#262626" font-family="Liberation Sans" textLength="30.8" lengthAdjust="spacingAndGlyphs" text-anchor="end" >100</text>
<text x="586" y="534.0" font-size="23.5" fill="#262626" font-family="Liberation Sans" textLength="407.5" lengthAdjust="spacingAndGlyphs" text-anchor="middle" >Customer Segmentation using K-Means</text>
<text x="586" y="1055.7" font-size="17.8" fill="#262626" font-family="Liberation Sans" textLength="163" lengthAdjust="spacingAndGlyphs" text-anchor="middle" >Annual Income(k$)</text>
<text x="0" y="0" font-family="Liberation Sans" font-size="17.8" fill="#262626" text-anchor="middle" textLength="195.5" lengthAdjust="spacingAndGlyphs" transform="translate(219.8 775.1) rotate(-90)">Spending score(1-100)</text>
<rect x="747.5" y="706" width="141.8" height="136" rx="3" fill="#ffffff" fill-opacity="0.8" stroke="#d6d6d6" stroke-width="1.1"/>
<circle cx="772.6" cy="722.10" r="5.95" fill="#1f77b4"/>
<text x="804" y="726.7" font-size="17.8" fill="#262626" font-family="Liberation Sans" textLength="76.5" lengthAdjust="spacingAndGlyphs" >Cluster 1</text>
<circle cx="772.6" cy="748.35" r="5.95" fill="#ff7f0e"/>
<text x="804" y="752.95" font-size="17.8" fill="#262626" font-family="Liberation Sans" textLength="76.5" lengthAdjust="spacingAndGlyphs" >Cluster 2</text>
<circle cx="772.6" cy="774.60" r="5.95" fill="#2ca02c"/>
<text x="804" y="779.2" font-size="17.8" fill="#262626" font-family="Liberation Sans" textLength="76.5" lengthAdjust="spacingAndGlyphs" >Cluster 3</text>
<circle cx="772.6" cy="800.85" r="5.95" fill="#d62728"/>
<text x="804" y="805.45" font-size="17.8" fill="#262626" font-family="Liberation Sans" textLength="76.5" lengthAdjust="spacingAndGlyphs" >Cluster 4</text>
<circle cx="772.6" cy="827.10" r="5.95" fill="#9467bd"/>
<text x="804" y="831.7" font-size="17.8" fill="#262626" font-family="Liberation Sans" textLength="76.5" lengthAdjust="spacingAndGlyphs" >Cluster 5</text>
<defs><linearGradient id="tb" x1="0" x2="1"><stop offset="0" stop-color="#d8e8ee"/><stop offset="0.14" stop-color="#e3e4ee"/><stop offset="0.35" stop-color="#e6e3f0"/><stop offset="0.57" stop-color="#dfe8ef"/><stop offset="0.7" stop-color="#e6e4f0"/><stop offset="0.86" stop-color="#e4e4ef"/><stop offset="1" stop-color="#d6eaf0"/></linearGradient></defs>
<rect x="0" y="1130" width="1917" height="59" fill="url(#tb)"/>
<rect x="0" y="1130" width="1917" height="1" fill="#b9bec6"/>
<defs><linearGradient id="nw" x1="0" y1="0" x2="1" y2="1"><stop offset="0" stop-color="#c64fd0"/><stop offset="0.35" stop-color="#f2548a"/><stop offset="0.75" stop-color="#f4566e"/><stop offset="1" stop-color="#fb8a3c"/></linearGradient><linearGradient id="nb" x1="0" y1="0" x2="1" y2="1"><stop offset="0" stop-color="#1957d8"/><stop offset="1" stop-color="#0a8ef0"/></linearGradient></defs>
<path d="M36.2 1144 L53 1149 L48.8 1166 L32 1161 Z" fill="url(#nb)"/>
<path d="M23.2 1157.2 L40 1164.5 L44 1168 L29 1173.8 Z" fill="#7b48f0"/>
<rect x="25.6" y="1150" width="24.4" height="17.2" rx="2.2" fill="url(#nw)"/>
<path d="M27.6 1160.6 L34.2 1154.6 Q36.6 1153.8 37.6 1159.2 Q37.8 1163.2 35.6 1163.8 L32.6 1163.2 L32.4 1165 Z" fill="#ffffff"/>
<path d="M34.6 1154.4 Q37.8 1155 37.8 1159.2 Q37.8 1163.5 35.4 1163.8" fill="#f9a9c2"/>
<rect x="40.6" y="1153.8" width="7.3" height="1.5" fill="#fff"/><rect x="40.6" y="1158" width="7.3" height="1.5" fill="#fff"/><rect x="40.6" y="1162" width="6.2" height="1.5" fill="#fde0e6"/>
<text x="62.3" y="1154.7" font-size="14.5" fill="#1a1a1a" font-family="Liberation Sans" textLength="96.5" lengthAdjust="spacingAndGlyphs" >Breaking news</text>
<text x="62.3" y="1174.8" font-size="14.5" fill="#5b5b5b" font-family="Liberation Sans" textLength="115.7" lengthAdjust="spacingAndGlyphs" >IND vs ENG T20...</text>
<defs><linearGradient id="win" x1="0" y1="0" x2="1" y2="1"><stop offset="0" stop-color="#3cc8f8"/><stop offset="1" stop-color="#0b74d6"/></linearGradient></defs>
<g transform="translate(583 1145.8)"><rect x="0" y="0" width="14" height="14" rx="0.8" fill="url(#win)"/><rect x="15.2" y="0" width="14" height="14" rx="0.8" fill="url(#win)"/><rect x="0" y="15.2" width="14" height="14" rx="0.8" fill="url(#win)"/><rect x="15.2" y="15.2" width="14" height="14" rx="0.8" fill="url(#win)"/></g>
<rect x="630.5" y="1140.7" width="272.3" height="38.4" rx="19.2" fill="#f6f7fb" stroke="#d3d6dd" stroke-width="1"/>
<circle cx="652" cy="1158" r="7" fill="none" stroke="#1a1a1a" stroke-width="2"/>
<path d="M657 1163 L662.5 1168.5" stroke="#1a1a1a" stroke-width="2.2"/>
<text x="675" y="1167" font-size="17.5" fill="#404040" font-family="Liberation Sans" textLength="51.5" lengthAdjust="spacingAndGlyphs" >Search</text>
<defs><linearGradient id="sk" x1="0" y1="0" x2="1" y2="1"><stop offset="0" stop-color="#f4f6fb"/><stop offset="0.6" stop-color="#c9c8e6"/><stop offset="1" stop-color="#6c64a8"/></linearGradient></defs>
<path d="M844.5 1168 Q846 1160 852 1155 Q850.5 1149.5 852.5 1148.8 Q858 1148.2 859.5 1150 Q862.8 1156 862.2 1164.5 Q858 1167.5 852 1169.5 Q847 1170.5 844.5 1168 Z" fill="url(#sk)"/>
<path d="M845 1168.5 Q850 1170 856 1167.5 Q860 1165.5 862.3 1163" fill="none" stroke="#3a3470" stroke-width="1.4"/>
<path d="M844.5 1172.8 L866 1166.2" stroke="#9aa5a8" stroke-width="1.6"/>
<path d="M848 1172 V1169.5 M858 1169 V1166.5" stroke="#9aa5a8" stroke-width="1.2"/>
<rect x="867.5" y="1148" width="2.6" height="6.6" rx="0.8" fill="#151233"/>
<path d="M868.8 1154.5 L870 1173.5 M867 1169.5 H872" stroke="#8f8cc0" stroke-width="0.9"/>
<path d="M876.5 1175.6 Q875 1175.6 875 1173 L876.2 1150.5 Q876.5 1148.2 878 1148.2 Q879.5 1148.2 879.5 1150.5 L878.8 1173 Q878.8 1175.6 876.5 1175.6 Z" fill="#5a9fd2"/>
<path d="M880.8 1175 Q879 1175 879.2 1172.5 L882 1150 Q882.5 1148 884 1148 Q885.8 1148 885.6 1150.5 L883.2 1172.5 Q882.8 1175 880.8 1175 Z" fill="#6aa6d6"/>
<rect x="875.4" y="1168.3" width="3.6" height="1.1" fill="#f5a04a"/><rect x="875.3" y="1170.6" width="3.6" height="1.1" fill="#f5a04a"/><rect x="879.6" y="1167.7" width="3.6" height="1.1" fill="#f5a04a"/><rect x="879.4" y="1170" width="3.6" height="1.1" fill="#f5a04a"/>
<rect x="876.2" y="1159" width="2.2" height="5" fill="#3b5c86"/><rect x="881.2" y="1158.4" width="2.2" height="5" fill="#3b5c86"/>
<path d="M891.5 1150.2 L894 1151.2 L892.5 1156.6 L890 1155.6 Z" fill="#151233"/>
<path d="M891.2 1156 L886.5 1174 M886 1170.5 L889.8 1171.5" stroke="#8f8cc0" stroke-width="0.9"/>
<defs><linearGradient id="tvd" x1="0" y1="0" x2="0" y2="1"><stop offset="0" stop-color="#4a4a4a"/><stop offset="1" stop-color="#111"/></linearGradient><linearGradient id="tvl" x1="0" y1="0" x2="0" y2="1"><stop offset="0" stop-color="#ffffff"/><stop offset="1" stop-color="#e4e4e4"/></linearGradient></defs>
<rect x="919" y="1153.6" width="22.4" height="20.4" rx="1.8" fill="url(#tvd)"/>
<rect x="926.4" y="1146" width="22.2" height="19.6" rx="1.8" fill="url(#tvl)" fill-opacity="0.72"/>
<defs><linearGradient id="fe" x1="0" y1="0" x2="0" y2="1"><stop offset="0" stop-color="#ffd96a"/><stop offset="1" stop-color="#f6b816"/></linearGradient></defs>
<path d="M973.8 1148.5 Q973.8 1147 975.3 1147 H983.5 L986.5 1150 H1002.3 Q1003.8 1150 1003.8 1151.5 V1155 H973.8 Z" fill="#e5a50a"/>
<rect x="973.8" y="1151.5" width="30" height="21.9" rx="1" fill="url(#fe)"/>
<path d="M979 1173.4 V1168 Q979 1165.8 981.2 1165.8 H996.4 Q998.6 1165.8 998.6 1168 V1173.4 Z" fill="#1878d4"/>
<rect x="982.5" y="1169.3" width="12.5" height="1.2" fill="#0b4f94"/>
<path d="M1033.2 1172.6 L1035.2 1166 A13 13 0 1 1 1039.6 1170.4 Z" fill="none" stroke="#1f8f4f" stroke-width="2.6" stroke-linejoin="round"/>
<path d="M1038.6 1154.2 Q1037.2 1156 1038.4 1159.2 Q1041 1165 1047.2 1167.6 Q1050.2 1168.6 1051.8 1166.8 L1052.2 1165.2 L1048.6 1163.2 L1047 1164.6 Q1043 1162.8 1041.2 1158.6 L1042.6 1157 L1040.8 1153.4 Z" fill="#1f8f4f"/>
<circle cx="1054.8" cy="1148.8" r="9.9" fill="#217f8e"/>
<text x="1054.8" y="1154.2" font-size="14.5" fill="#fff" font-family="Liberation Sans" text-anchor="middle" >5</text>
<rect x="1039.5" y="1180" width="8" height="3.6" rx="1.8" fill="#6e6e78"/>
<defs><linearGradient id="cpa" x1="0" y1="0" x2="0" y2="1"><stop offset="0" stop-color="#2bb8f7"/><stop offset="0.3" stop-color="#1b8fdc"/><stop offset="0.6" stop-color="#4fb35c"/><stop offset="1" stop-color="#f5cc05"/></linearGradient><linearGradient id="cpb" x1="1" y1="0" x2="0" y2="1"><stop offset="0" stop-color="#b548ec"/><stop offset="0.5" stop-color="#ec5a96"/><stop offset="1" stop-color="#fba955"/></linearGradient></defs>
<path d="M1100.5 1146 H1102.8 Q1106.2 1146 1107.3 1150 L1108.2 1153.5 H1101 Z" fill="#1d4fd6"/>
<path d="M1091 1165 H1098.2 L1095.9 1172.7 H1094.6 Q1092.4 1172.7 1091.8 1169 Z" fill="#f1562c"/>
<path d="M1092.2 1146 H1102.2 L1095.6 1165 H1087.2 Q1083.6 1165 1084.6 1161.5 L1088 1150 Q1089.2 1146 1092.2 1146 Z" fill="url(#cpa)"/>
<path d="M1103.8 1153.1 H1110.5 Q1114.2 1153.1 1113.2 1157 L1108.3 1169.5 Q1107 1172.7 1103.6 1172.7 H1097 Z" fill="url(#cpb)"/>
<defs><linearGradient id="edt" x1="0" y1="0" x2="1" y2="0.6"><stop offset="0" stop-color="#37bdf5"/><stop offset="0.5" stop-color="#2cc3c9"/><stop offset="1" stop-color="#5fe05c"/></linearGradient><linearGradient id="edl" x1="0" y1="0" x2="0" y2="1"><stop offset="0" stop-color="#1a8fe0"/><stop offset="1" stop-color="#0a6cc8"/></linearGradient></defs>
<path d="M1139.2 1157 C1139.8 1149.5 1146 1144.9 1154.5 1144.9 C1163 1144.9 1169.2 1151 1169.2 1157.5 C1169.2 1162 1166 1164.5 1161.5 1164.5 C1158.5 1164.5 1156.2 1163 1157.6 1161 C1158.6 1158.5 1157.2 1155.6 1153.6 1155.4 C1149.5 1152.2 1143 1151 1139.2 1157 Z" fill="url(#edt)"/>
<path d="M1139.2 1157 C1141 1152.5 1145 1151.3 1148.3 1151.3 C1152 1151.3 1154.6 1153.2 1155.6 1155.6 C1150.2 1155.9 1147.2 1159 1147.5 1163.2 C1148 1169 1151.8 1173.6 1155.8 1175 C1154.6 1175.2 1153.6 1175.2 1152.6 1175 C1145 1174.2 1139.2 1167 1139.2 1160 Z" fill="url(#edl)"/>
<path d="M1147.6 1162.4 C1147.6 1158.4 1149.6 1156.4 1151 1156.6 C1150.2 1161.4 1153.2 1166 1159 1166.8 C1162 1167.2 1164.6 1166.4 1166.8 1167.2 C1164.2 1172 1159.6 1175 1154.6 1175 C1150.6 1175 1147.6 1169.4 1147.6 1162.4 Z" fill="#0f55a6"/>
<defs><linearGradient id="st" x1="0" y1="0" x2="1" y2="1"><stop offset="0" stop-color="#1f66b8"/><stop offset="1" stop-color="#1d3a72"/></linearGradient></defs>
<path d="M1202.3 1150.5 V1147.2 H1215 V1150.5" fill="none" stroke="#3cb4f2" stroke-width="2.3"/>
<path d="M1196.5 1150 H1220.5 Q1223 1150 1223 1152.5 V1171 Q1223 1175 1219 1175 H1198 Q1194 1175 1194 1171 V1152.5 Q1194 1150 1196.5 1150 Z" fill="url(#st)"/>
<rect x="1202.9" y="1156.7" width="5.1" height="5.1" fill="#f35325"/><rect x="1209.3" y="1156.7" width="5.1" height="5.1" fill="#81bc06"/><rect x="1202.9" y="1163.1" width="5.1" height="5.1" fill="#05a6f0"/><rect x="1209.3" y="1163.1" width="5.1" height="5.1" fill="#ffba08"/>
<defs><linearGradient id="pb1" x1="0" y1="0" x2="1" y2="0"><stop offset="0" stop-color="#e6a618"/><stop offset="1" stop-color="#c97d06"/></linearGradient><linearGradient id="pb2" x1="0" y1="0" x2="1" y2="0"><stop offset="0" stop-color="#f4cc48"/><stop offset="1" stop-color="#e0a81e"/></linearGradient><linearGradient id="pb3" x1="0" y1="0" x2="0" y2="1"><stop offset="0" stop-color="#f8e18a"/><stop offset="1" stop-color="#f2cf55"/></linearGradient></defs>
<rect x="1248.8" y="1144.9" width="30.5" height="30.1" fill="#23818f"/>
<rect x="1265" y="1144.9" width="10.5" height="30.1" fill="url(#pb1)"/>
<rect x="1258" y="1152.4" width="10" height="22.6" fill="url(#pb2)"/>
<rect x="1252" y="1160" width="10" height="15" fill="url(#pb3)"/>
<rect x="1295.3" y="1136" width="47.7" height="48.2" rx="5" fill="#f7f8fb" fill-opacity="0.75"/>
<path d="M1318.9 1160.1 L1331.30 1151.83 A14.9 14.9 0 0 0 1305.29 1154.04 Z" fill="#db4437"/>
<path d="M1318.9 1160.1 L1305.29 1154.04 A14.9 14.9 0 0 0 1319.42 1174.99 Z" fill="#0f9d58"/>
<path d="M1318.9 1160.1 L1319.42 1174.99 A14.9 14.9 0 0 0 1331.30 1151.83 Z" fill="#fcc934"/>
<circle cx="1318.9" cy="1160.1" r="6.6" fill="#ffffff"/><circle cx="1318.9" cy="1160.1" r="5.3" fill="#4285f4"/>
<rect x="1309" y="1180" width="20.2" height="3.9" rx="1.95" fill="#1f7f8e"/>
<path d="M1578.8 1163.2 L1585.5 1156.4 L1592.2 1163.2" fill="none" stroke="#1a1a1a" stroke-width="1.6"/>
<defs><linearGradient id="cl" x1="0" y1="0" x2="0" y2="1"><stop offset="0" stop-color="#d6d6d6"/><stop offset="1" stop-color="#a8a8a8"/></linearGradient></defs>
<path d="M1620 1166 Q1615.8 1166 1615.8 1162 Q1615.8 1158.6 1619 1158 Q1620.2 1152 1625.6 1151.8 Q1631 1152 1632 1157.6 Q1634.6 1158.6 1634.6 1161.8 Q1634.6 1166 1630.6 1166 Z" fill="url(#cl)" stroke="#8c8c8c" stroke-width="0.9"/>
<circle cx="1630.4" cy="1164.4" r="5.6" fill="#ffffff"/><circle cx="1630.4" cy="1164.4" r="4.8" fill="#1677d6"/>
<rect x="1629.7" y="1163" width="1.4" height="4" fill="#fff"/><circle cx="1630.4" cy="1161.6" r="0.8" fill="#fff"/>
<text x="1673.5" y="1156" font-size="14.5" fill="#1a1a1a" font-family="Liberation Sans" textLength="29" lengthAdjust="spacingAndGlyphs" text-anchor="middle" >ENG</text>
<text x="1673.5" y="1176" font-size="14.5" fill="#1a1a1a" font-family="Liberation Sans" textLength="15.5" lengthAdjust="spacingAndGlyphs" text-anchor="middle" >IN</text>
<path d="M1710 1156 Q1721 1146 1732 1156 M1713.5 1159.5 Q1721 1153 1728.5 1159.5 M1717 1163 Q1721 1160 1725 1163" fill="none" stroke="#1a1a1a" stroke-width="1.6"/>
<circle cx="1721" cy="1166" r="1.6" fill="#1a1a1a"/>
<path d="M1742 1157 H1746 L1751 1153 V1168 L1746 1164 H1742 Z" fill="none" stroke="#1a1a1a" stroke-width="1.5" stroke-linejoin="round"/>
<path d="M1754 1157 Q1756.5 1160.5 1754 1164 M1757 1154.5 Q1761 1160.5 1757 1166.5" fill="none" stroke="#1a1a1a" stroke-width="1.4"/>
<rect x="1772.2" y="1154.4" width="21.6" height="11" rx="2.6" fill="none" stroke="#1a1a1a" stroke-width="1.6"/>
<rect x="1774.6" y="1156.8" width="14.6" height="6.2" rx="1" fill="#1a1a1a"/>
<rect x="1794.4" y="1157.6" width="1.6" height="4.6" rx="0.8" fill="#1a1a1a"/>
<text x="1893.3" y="1154.7" font-size="14.5" fill="#1a1a1a" font-family="Liberation Sans" textLength="36.5" lengthAdjust="spacingAndGlyphs" text-anchor="end" >00:40</text>
<text x="1893.3" y="1174.7" font-size="14.5" fill="#1a1a1a" font-family="Liberation Sans" textLength="77.5" lengthAdjust="spacingAndGlyphs" text-anchor="end" >06-03-2026</text>
</svg></body></html>
